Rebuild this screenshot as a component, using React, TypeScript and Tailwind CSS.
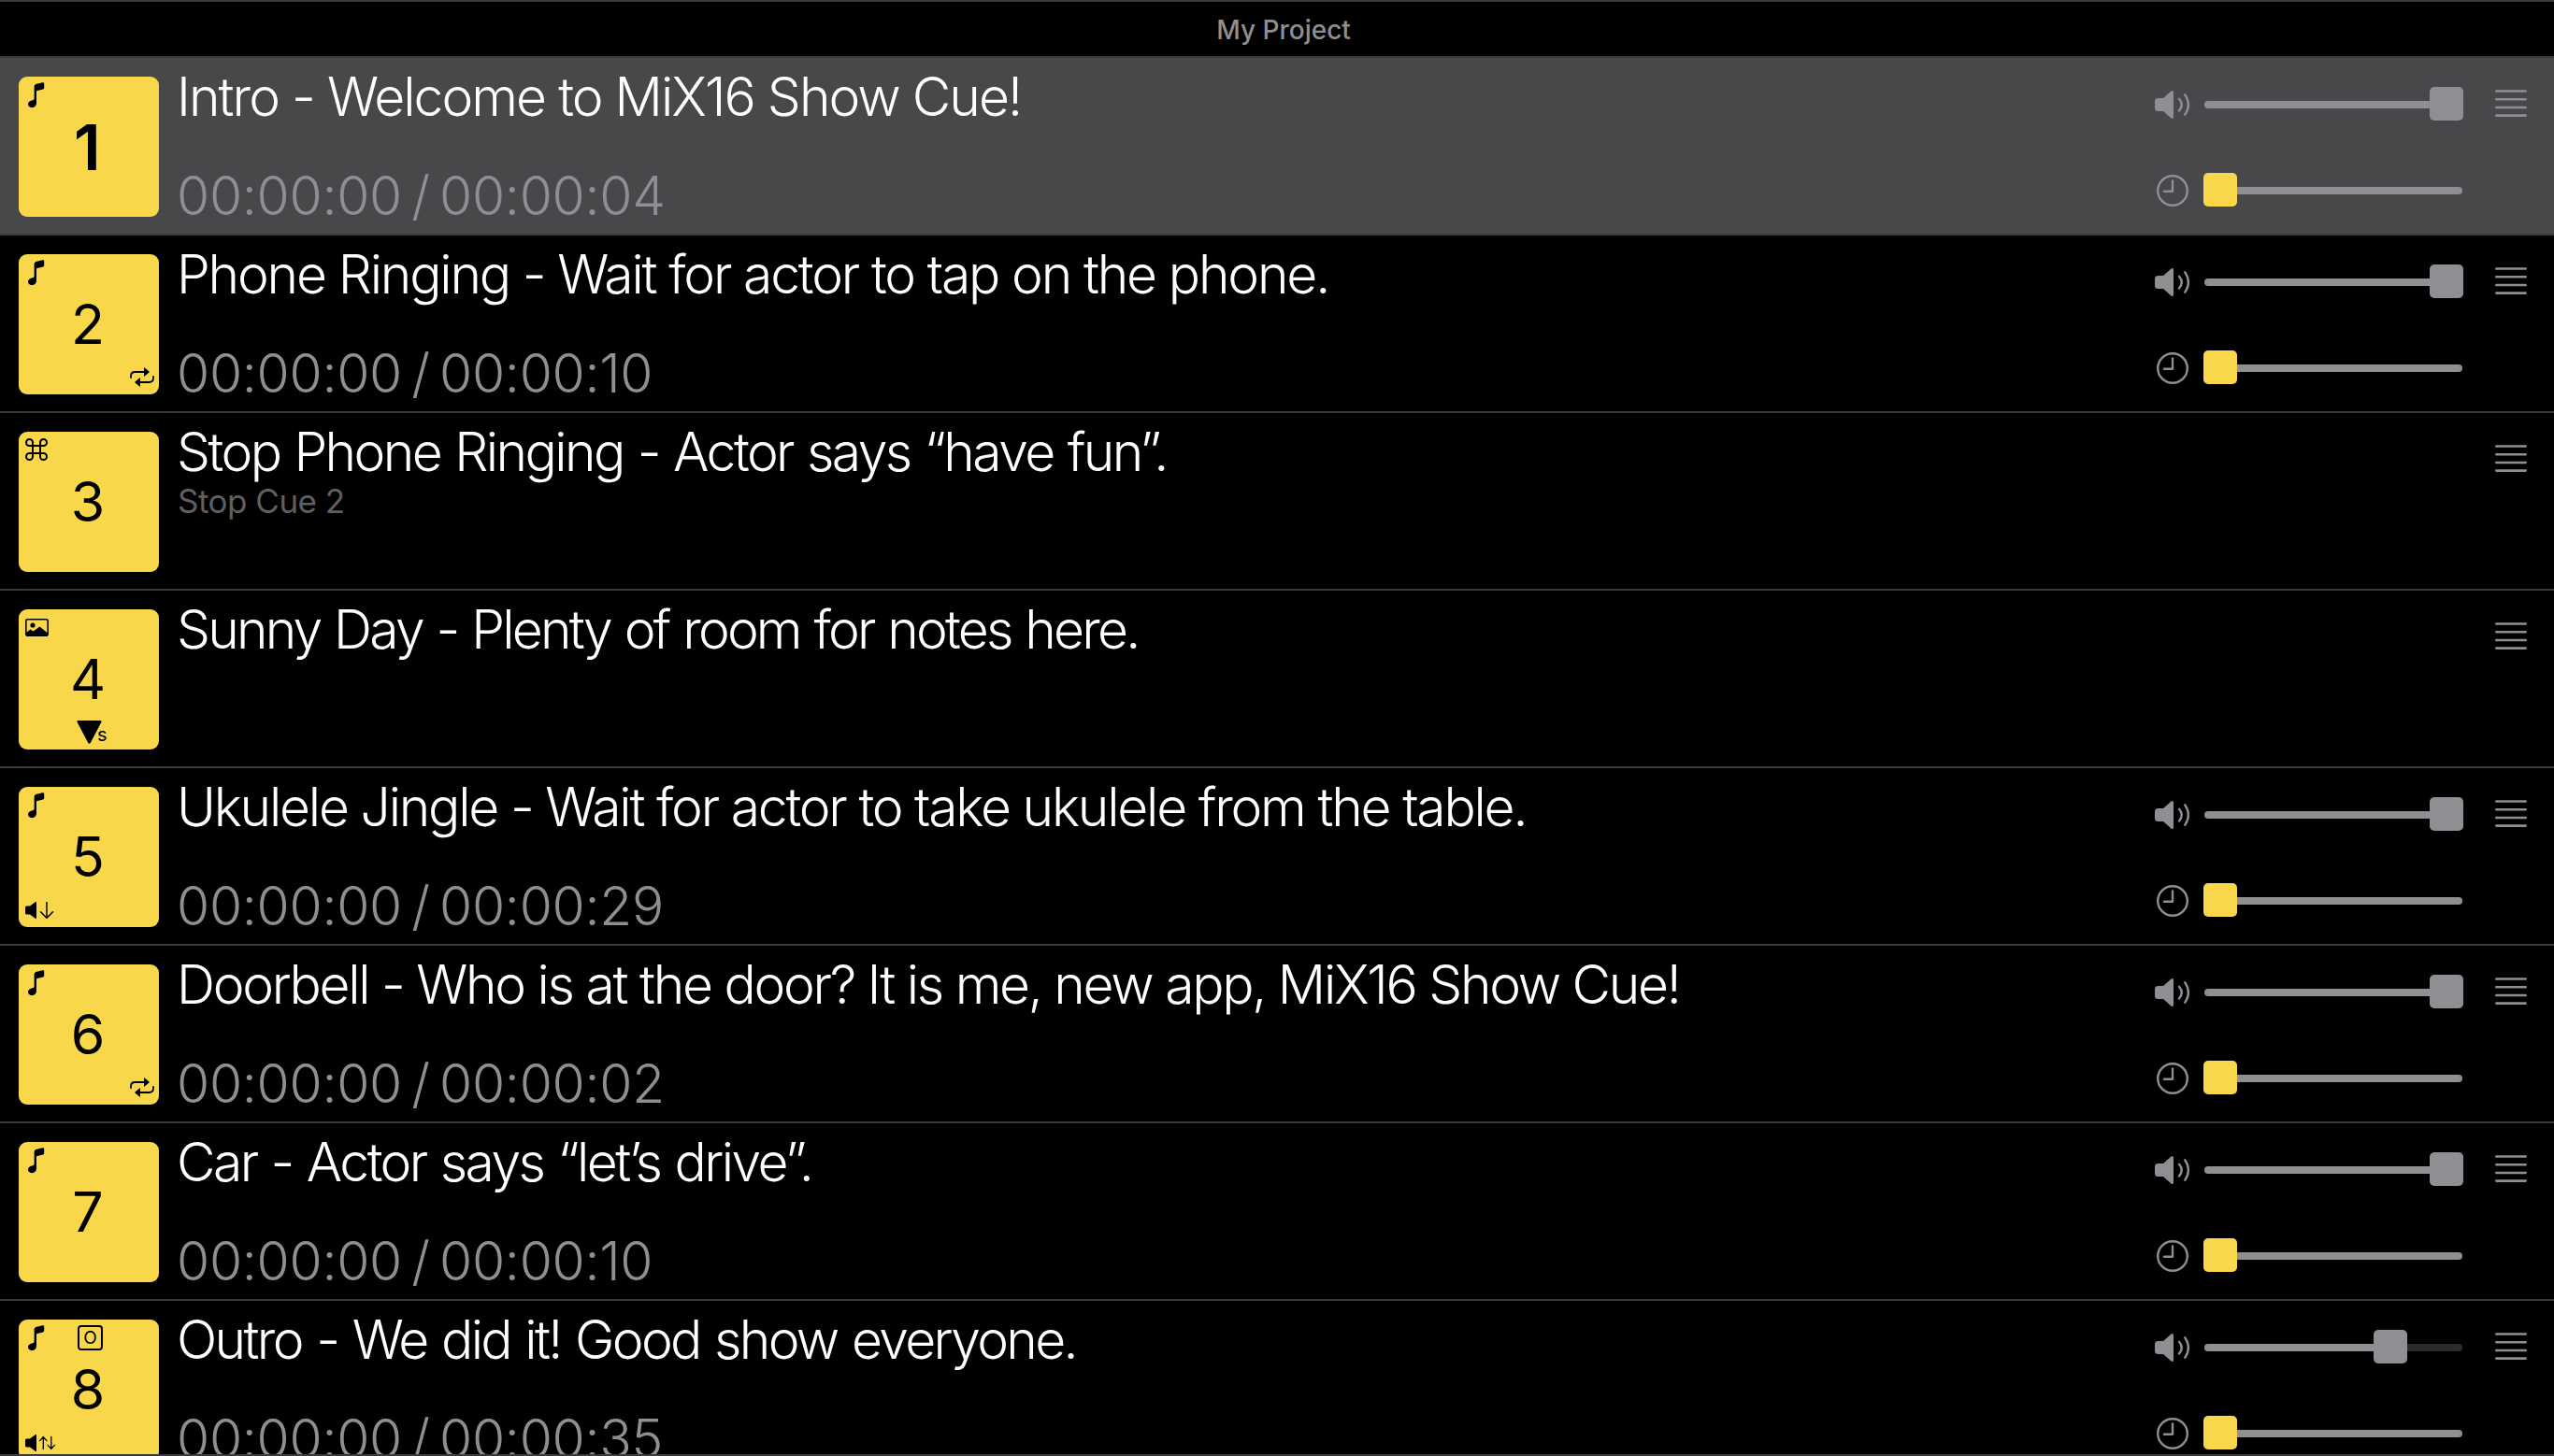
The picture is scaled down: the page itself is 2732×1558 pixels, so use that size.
import React from "react";

type TileIcon = "note" | "command" | "image";
type Fade = "out" | "both";

interface Cue {
  id: number;
  title: string;
  titleClass: string;
  icon: TileIcon;
  duration?: string;
  subtitle?: string;
  volume?: number;
  selected?: boolean;
  loop?: boolean;
  fade?: Fade;
  stopMarker?: boolean;
  output?: boolean;
}

const cues: Cue[] = [
  { id: 1, title: "Intro - Welcome to MiX16 Show Cue!", titleClass: "tracking-[-1.97px]", icon: "note", duration: "00:00:04", volume: 1, selected: true },
  { id: 2, title: "Phone Ringing - Wait for actor to tap on the phone.", titleClass: "tracking-[-2.18px]", icon: "note", duration: "00:00:10", volume: 1, loop: true },
  { id: 3, title: "Stop Phone Ringing - Actor says “have fun”.", titleClass: "tracking-[-2.56px] [word-spacing:1.5px]", icon: "command", subtitle: "Stop Cue 2" },
  { id: 4, title: "Sunny Day - Plenty of room for notes here.", titleClass: "tracking-[-2.81px] [word-spacing:1.5px]", icon: "image", stopMarker: true },
  { id: 5, title: "Ukulele Jingle - Wait for actor to take ukulele from the table.", titleClass: "tracking-[-2.22px]", icon: "note", duration: "00:00:29", volume: 1, fade: "out" },
  { id: 6, title: "Doorbell - Who is at the door? It is me, new app, MiX16 Show Cue!", titleClass: "tracking-[-2.29px]", icon: "note", duration: "00:00:02", volume: 1, loop: true },
  { id: 7, title: "Car - Actor says “let’s drive”.", titleClass: "tracking-[-2.56px] [word-spacing:1.5px]", icon: "note", duration: "00:00:10", volume: 1 },
  { id: 8, title: "Outro - We did it! Good show everyone.", titleClass: "tracking-[-2.66px] [word-spacing:2px]", icon: "note", duration: "00:00:35", volume: 0.75, fade: "both", output: true },
];

const NoteIcon = () => (
  <svg className="absolute left-[9px] top-[5px]" width="20" height="29" viewBox="0 0 20 29">
    <path
      d="M7.6 5.6Q7.6 3.6 9.4 3.1L16.6 1.2Q18.2.9 18.2 2.4V7q0 1.1-1.2 1.4L10 10.2V23c0 3-2 5.2-4.9 5.2C2.700 28.200 1 26.700 1 24.600c0-2.200 1.600-3.500 4-4.100 1.800-.4 2.600-.9 2.600-2.600z"
      fill="#000"
    />
  </svg>
);

const CommandIcon = () => (
  <svg className="absolute left-[7px] top-[7px]" width="24" height="24" viewBox="0 0 24 24" fill="none" stroke="#000" strokeWidth="2">
    <path d="M8 8H4.500A3.500 3.500 0 1 1 8 4.500V19.500A3.500 3.500 0 1 1 4.500 16H19.500A3.500 3.500 0 1 1 16 19.500V4.500A3.500 3.500 0 1 1 19.500 8Z" />
  </svg>
);

const ImageIcon = () => (
  <svg className="absolute left-[7px] top-[10px]" width="25" height="19" viewBox="0 0 25 19">
    <rect x=".8" y=".8" width="23.400" height="17.400" rx="2" fill="none" stroke="#000" strokeWidth="1.600" />
    <circle cx="8" cy="7" r="2.600" />
    <path d="M1 15l4.500-3.500 3 2L15.500 8.500 24 15.500V17q0 1.300-1.300 1.300H2.300Q1 18.300 1 17z" />
  </svg>
);

const LoopIcon = () => (
  <svg className="absolute left-[119px] top-[121px]" width="26" height="21" viewBox="0 0 26 21">
    <path d="M1 11V9.500Q1 5 5.500 5H15M25 10v1.500Q25 16 20.500 16H11" fill="none" stroke="#000" strokeWidth="1.800" strokeLinecap="round" />
    <path d="M15 .8V9.200Q15 10 15.700 9.400L20.500 5.500Q21 5 20.500 4.500L15.700.6Q15 0 15 .8zM11 11.800V20.200Q11 21 10.300 20.400L5.500 16.500Q5 16 5.500 15.500L10.300 11.600Q11 11 11 11.800z" />
  </svg>
);

const FadeIcon = ({ fade }: { fade: Fade }) => (
  <svg className="absolute left-[7px] top-[123px]" width="34" height="18" viewBox="0 0 34 18">
    <path d="M0 6Q0 4.500 1.500 4.500H5L10.700.3Q12 -.3 12 1V17Q12 18.300 10.700 17.700L5 13.500H1.500Q0 13.500 0 12z" />
    {fade === "out" ? (
      <path d="M23 .5V17M16.500 10.800L23 17.300 29.500 10.800" fill="none" stroke="#000" strokeWidth="1.500" strokeLinecap="round" />
    ) : (
      <path d="M19.300 15.500V2.500M15.600 6.600L19.300 2.700 23 6.600M27.800 2.500V15.500M24.100 11.400L27.800 15.300 31.500 11.400" fill="none" stroke="#000" strokeWidth="1.300" strokeLinecap="round" />
    )}
  </svg>
);

const Tile = ({ cue }: { cue: Cue }) => (
  <div className="relative flex h-[150px] w-[150px] shrink-0 items-center justify-center rounded-[9px] bg-[#f8d74a] text-black">
    {cue.icon === "note" && <NoteIcon />}
    {cue.icon === "command" && <CommandIcon />}
    {cue.icon === "image" && <ImageIcon />}
    {cue.output && (
      <span className="absolute left-[63px] top-[6px] flex h-[27px] w-[27px] items-center justify-center rounded-[4px] border-2 border-black text-[19px] leading-none">
        O
      </span>
    )}
    <span className={cue.selected ? "pr-[3px] text-[68px] font-semibold leading-none" : "pb-[2px] pr-[2px] text-[59px] leading-none"}>
      {cue.id}
    </span>
    {cue.loop && <LoopIcon />}
    {cue.fade && <FadeIcon fade={cue.fade} />}
    {cue.stopMarker && (
      <>
        <svg className="absolute left-[62px] top-[119px]" width="27" height="25" viewBox="0 0 27 25">
          <path d="M1.500 0H25.500Q27 .2 26.400 1.800L14.700 24Q13.500 25.500 12.300 24L.6 1.800Q0 .2 1.500 0z" />
        </svg>
        <span className="absolute left-[84px] top-[122px] text-[20px] leading-[24px]">s</span>
      </>
    )}
  </div>
);

const SpeakerIcon = () => (
  <svg width="38" height="30" viewBox="0 0 38 30" className="shrink-0">
    <path d="M0 11.500Q0 8 3.500 8H9L17.500.5Q20 -1 20 2V28Q20 31 17.500 29.500L9 22H3.500Q0 22 0 18.500z" fill="#8e8e93" />
    <path d="M26 8.800Q31.500 15 26 21.500M32.300 4.300Q39.500 15 32.300 25.700" fill="none" stroke="#8e8e93" strokeWidth="2.400" strokeLinecap="round" />
  </svg>
);

const ClockIcon = () => (
  <svg width="34" height="34" viewBox="0 0 34 34" fill="none" stroke="#8e8e93" strokeWidth="2.400" className="shrink-0">
    <circle cx="17" cy="17" r="15.800" />
    <path d="M17 6.500V17.800H8" strokeLinecap="round" strokeLinejoin="round" />
  </svg>
);

const Slider = ({ value, thumb, rest }: { value: number; thumb: string; rest: string }) => (
  <div className="relative flex h-9 w-[278px] items-center px-px pt-[2px]">
    <div className={`h-2 w-full overflow-hidden rounded-full ${rest}`}>
      <div className="h-full bg-[#8e8e93]" style={{ width: `${value * 100}%` }} />
    </div>
    <div
      className={`absolute top-0 h-9 w-9 rounded-[5px] ${thumb}`}
      style={{ left: Math.round(value * 242) }}
    />
  </div>
);

const Controls = ({ volume }: { volume: number }) => (
  <div className="flex flex-col gap-14 pt-[31px]">
    <div className="flex h-9 items-center">
      <div className="flex w-[52px] pt-[2px]">
        <SpeakerIcon />
      </div>
      <Slider value={volume} thumb="bg-[#8e8e93]" rest="bg-[#2c2c2e]" />
    </div>
    <div className="flex h-9 items-center">
      <div className="flex w-[52px] pl-[2px] pt-[2px]">
        <ClockIcon />
      </div>
      <Slider value={0} thumb="bg-[#f8d74a]" rest="bg-[#8e8e93]" />
    </div>
  </div>
);

const DragHandle = () => (
  <svg className="mt-[34px] ml-[34px] mr-[29px] shrink-0" width="34" height="29" viewBox="0 0 34 29" stroke="#8e8e93" strokeWidth="2.600" strokeLinecap="round">
    <path d="M1.300 1.500H32.700M1.300 10.300H32.700M1.300 19H32.700M1.300 27.600H32.700" />
  </svg>
);

const CueRow = ({ cue }: { cue: Cue }) => (
  <li className={`flex h-[190px] shrink-0 border-b-2 border-[#3a3a3c] pl-5 ${cue.selected ? "bg-[#48484a]" : "bg-black"}`}>
    <div className="pt-5">
      <Tile cue={cue} />
    </div>
    <div className="flex min-w-0 flex-1 flex-col whitespace-nowrap pl-[19px] pt-[7px] font-light text-white">
      <h2 className={`text-[57px] leading-[70px] ${cue.titleClass}`}>
        {cue.title}
      </h2>
      {cue.subtitle && (
        <p className="-mt-[5px] pl-px text-[35px] font-normal leading-[44px] tracking-[-0.5px] text-[#5f5f62]">
          {cue.subtitle}
        </p>
      )}
      {cue.duration && (
        <p className="mt-[36px] text-[57px] leading-[70px] tracking-[-0.3px] text-[#8e8e93] [word-spacing:-5.5px]">
          00:00:00 / {cue.duration}
        </p>
      )}
    </div>
    {cue.volume !== undefined && <Controls volume={cue.volume} />}
    <DragHandle />
  </li>
);

export default function App() {
  return (
    <div className="flex h-[1558px] w-[2732px] flex-col overflow-hidden border-y-2 border-[#3a3a3c] bg-black font-['Inter','Liberation_Sans',sans-serif]">
      <header className="flex h-[60px] shrink-0 items-center justify-center border-b-2 border-[#3a3a3c] pl-[14px] pt-[2px] text-[28px] font-medium text-[#8e8e93]">
        My Project
      </header>
      <ul className="flex min-h-0 flex-1 flex-col overflow-hidden">
        {cues.map((cue) => (
          <CueRow key={cue.id} cue={cue} />
        ))}
      </ul>
    </div>
  );
}
